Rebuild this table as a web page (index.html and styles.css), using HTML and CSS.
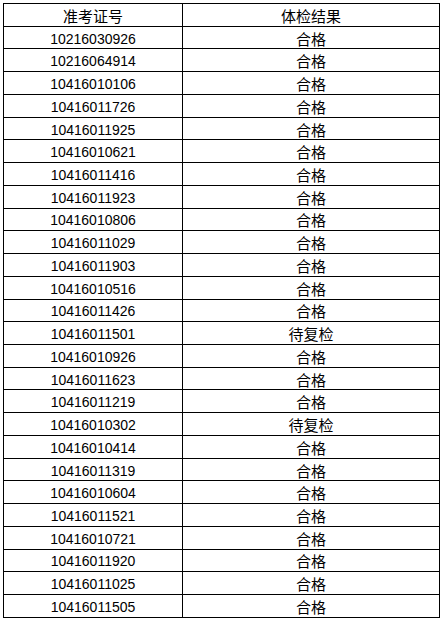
FILE: index.html
```html
<!DOCTYPE html>
<html lang="zh-CN">
<head>
<meta charset="utf-8">
<title>体检结果</title>
<link rel="stylesheet" href="styles.css">
</head>
<body>
<table class="results">
<colgroup><col class="col-id"><col class="col-res"></colgroup>
<thead>
<tr><th>准考证号</th><th>体检结果</th></tr>
</thead>
<tbody>
<tr><td class="num">10216030926</td><td>合格</td></tr>
<tr><td class="num">10216064914</td><td>合格</td></tr>
<tr><td class="num">10416010106</td><td>合格</td></tr>
<tr><td class="num">10416011726</td><td>合格</td></tr>
<tr><td class="num">10416011925</td><td>合格</td></tr>
<tr><td class="num">10416010621</td><td>合格</td></tr>
<tr><td class="num">10416011416</td><td>合格</td></tr>
<tr><td class="num">10416011923</td><td>合格</td></tr>
<tr><td class="num">10416010806</td><td>合格</td></tr>
<tr><td class="num">10416011029</td><td>合格</td></tr>
<tr><td class="num">10416011903</td><td>合格</td></tr>
<tr><td class="num">10416010516</td><td>合格</td></tr>
<tr><td class="num">10416011426</td><td>合格</td></tr>
<tr><td class="num">10416011501</td><td>待复检</td></tr>
<tr><td class="num">10416010926</td><td>合格</td></tr>
<tr><td class="num">10416011623</td><td>合格</td></tr>
<tr><td class="num">10416011219</td><td>合格</td></tr>
<tr><td class="num">10416010302</td><td>待复检</td></tr>
<tr><td class="num">10416010414</td><td>合格</td></tr>
<tr><td class="num">10416011319</td><td>合格</td></tr>
<tr><td class="num">10416010604</td><td>合格</td></tr>
<tr><td class="num">10416011521</td><td>合格</td></tr>
<tr><td class="num">10416010721</td><td>合格</td></tr>
<tr><td class="num">10416011920</td><td>合格</td></tr>
<tr><td class="num">10416011025</td><td>合格</td></tr>
<tr><td class="num">10416011505</td><td>合格</td></tr>
</tbody>
</table>
</body>
</html>
```
FILE: styles.css
```css
html, body {
  margin: 0;
  padding: 0;
  background: #fff;
}
body {
  padding: 3px;
}
.results {
  border-collapse: collapse;
  table-layout: fixed;
  width: 436px;
  color: #000;
  font-family: "Noto Sans CJK SC", "Liberation Sans", sans-serif;
  font-size: 15px;
}
.col-id { width: 179px; }
.col-res { width: 257px; }
.results tr {
  height: 22.74px;
}
.results th,
.results td {
  border: 1px solid #000;
  padding: 2px 0 0 0;
  text-align: center;
  vertical-align: middle;
  font-weight: normal;
  line-height: 18px;
  white-space: nowrap;
}
.results td.num {
  font-family: "Liberation Sans", sans-serif;
  font-size: 14px;
}
```
